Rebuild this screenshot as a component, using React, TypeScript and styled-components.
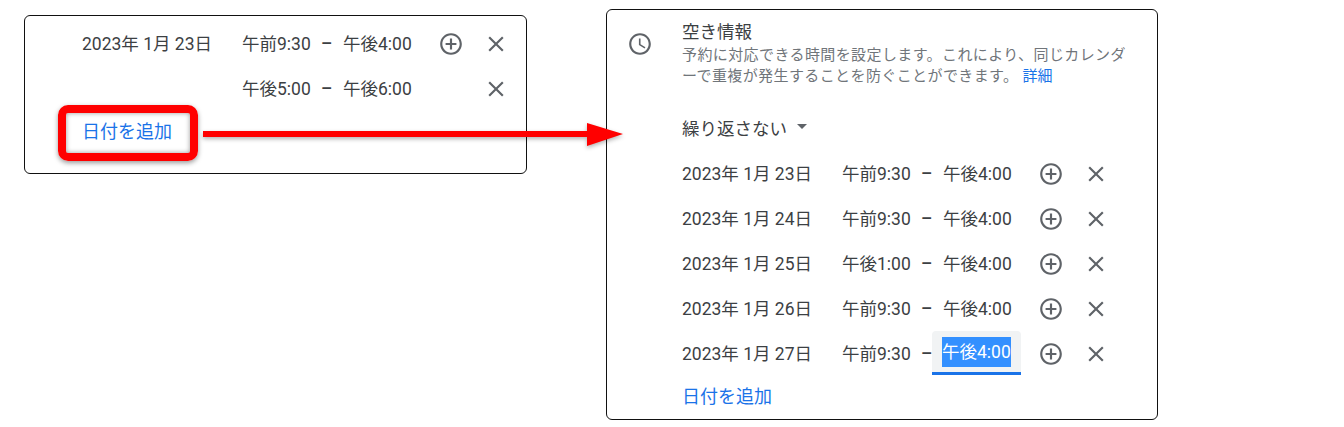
import React from "react";
import styled, { createGlobalStyle } from "styled-components";

const GlobalStyle = createGlobalStyle`
  html, body {
    margin: 0;
    padding: 0;
    background: #fff;
  }
  body {
    font-family: Roboto, "Noto Sans CJK JP", sans-serif;
    color: #3c4043;
  }
`;

const Page = styled.div`
  position: relative;
  width: 1344px;
  height: 427px;
  display: flex;
  align-items: flex-start;
  gap: 79px;
  padding-left: 24px;
  box-sizing: border-box;
  overflow: hidden;
`;

const Card = styled.section`
  box-sizing: border-box;
  border: 1px solid #111;
  border-radius: 6px;
  background: #fff;
`;

const SummaryCard = styled(Card)`
  width: 503px;
  height: 159px;
  margin-top: 15px;
  padding: 5px 0 0 57px;
`;

const DetailCard = styled(Card)`
  width: 552px;
  height: 411px;
  margin-top: 9px;
  padding: 10px 0 0 20px;
  display: flex;
  gap: 29px;
`;

const IconColumn = styled.div`
  padding-top: 11px;
  height: 26px;
`;

const Info = styled.div`
  flex: 1;
`;

const Title = styled.h2`
  margin: 0;
  font-size: 17.5px;
  font-weight: 400;
  line-height: 24px;
  color: #3c4043;
`;

const Description = styled.p`
  margin: 1px 0 19px;
  width: 450px;
  font-size: 15px;
  line-height: 21px;
  letter-spacing: 0.4px;
  color: #70757a;
`;

const LearnMore = styled.a`
  color: #1a73e8;
  letter-spacing: 0;
  margin-left: 4px;
`;

const RepeatSelect = styled.div`
  box-sizing: border-box;
  display: flex;
  align-items: center;
  gap: 10px;
  height: 45px;
  padding-bottom: 2px;
  font-size: 17.5px;
`;

const Caret = styled.span`
  width: 0;
  height: 0;
  border-left: 5px solid transparent;
  border-right: 5px solid transparent;
  border-top: 5px solid #5f6368;
  margin-top: -2px;
`;

const Row = styled.div`
  display: flex;
  align-items: center;
  height: 45px;
  font-size: 17.5px;
  white-space: nowrap;
`;

const CellText = styled.span`
  flex: none;
  margin-top: -3px;
`;

const DateCell = styled(CellText)`
  width: 160px;
`;

const TimeCell = styled(CellText)`
  width: 79px;
`;

const Dash = styled.span`
  flex: none;
  width: 22px;
  margin-top: 1px;
  font-weight: 500;
`;

const EndCell = styled(CellText)`
  width: 67px;
`;

const ActiveField = styled.span`
  box-sizing: border-box;
  flex: none;
  display: flex;
  align-items: center;
  justify-content: center;
  width: 89px;
  height: 44px;
  margin: -2px -11px 0 -11px;
  background: #f1f3f4;
  border-bottom: 3px solid #1a73e8;
  border-radius: 4px 4px 0 0;
`;

const Selected = styled.span`
  display: block;
  line-height: 30px;
  width: 69px;
  margin-top: 2px;
  background: #3390ff;
  color: #fff;
`;

const IconSlot = styled.span<{ $offset: number }>`
  flex: none;
  display: flex;
  width: 26px;
  height: 26px;
  margin-left: ${({ $offset }) => $offset}px;
`;

const AddDate = styled.a`
  display: flex;
  align-items: center;
  height: 44px;
  margin-top: -3px;
  font-size: 18px;
  color: #1a73e8;
`;

const Highlight = styled.div`
  position: absolute;
  left: 58px;
  top: 105px;
  width: 140px;
  height: 56px;
  box-sizing: border-box;
  border: 8px solid #ff0000;
  border-radius: 10px;
  box-shadow: 0 2px 5px rgba(0, 0, 0, 0.4), inset 0 0 5px rgba(0, 0, 0, 0.4);
`;

const Arrow = styled.svg`
  position: absolute;
  left: 198px;
  top: 115px;
  filter: drop-shadow(0 2px 2px rgba(0, 0, 0, 0.3));
`;

const Icon: React.FC<{ d: string }> = ({ d }) => (
  <svg width="26" height="26" viewBox="0 0 24 24" fill="#5f6368">
    <path d={d} />
  </svg>
);

const ADD_ICON =
  "M13 7h-2v4H7v2h4v4h2v-4h4v-2h-4V7zm-1-5C6.48 2 2 6.48 2 12s4.48 10 10 10 10-4.48 10-10S17.52 2 12 2zm0 18c-4.41 0-8-3.59-8-8s3.59-8 8-8 8 3.59 8 8-3.59 8-8 8z";
const CLOSE_ICON =
  "M19 6.41L17.59 5 12 10.59 6.41 5 5 6.41 10.59 12 5 17.59 6.41 19 12 13.41 17.59 19 19 17.59 13.41 12z";
const CLOCK_ICON =
  "M11.99 2C6.47 2 2 6.48 2 12s4.47 10 9.99 10C17.52 22 22 17.52 22 12S17.52 2 11.99 2zM12 20c-4.42 0-8-3.58-8-8s3.58-8 8-8 8 3.58 8 8-3.58 8-8 8zm.5-13H11v6l5.25 3.15.75-1.23-4.5-2.67z";

type SlotRow = {
  date?: string;
  start: string;
  end: string;
  active?: boolean;
  canAdd?: boolean;
};

const SlotLine: React.FC<SlotRow> = ({ date, start, end, active, canAdd = true }) => (
  <Row>
    <DateCell>{date}</DateCell>
    <TimeCell>{start}</TimeCell>
    <Dash>–</Dash>
    {active ? (
      <ActiveField>
        <Selected>{end}</Selected>
      </ActiveField>
    ) : (
      <EndCell>{end}</EndCell>
    )}
    {canAdd ? (
      <IconSlot $offset={28}>
        <Icon d={ADD_ICON} />
      </IconSlot>
    ) : (
      <IconSlot $offset={28} />
    )}
    <IconSlot $offset={19}>
      <Icon d={CLOSE_ICON} />
    </IconSlot>
  </Row>
);

const weekRows: SlotRow[] = [
  { date: "2023年 1月 23日", start: "午前9:30", end: "午後4:00" },
  { date: "2023年 1月 24日", start: "午前9:30", end: "午後4:00" },
  { date: "2023年 1月 25日", start: "午後1:00", end: "午後4:00" },
  { date: "2023年 1月 26日", start: "午前9:30", end: "午後4:00" },
  { date: "2023年 1月 27日", start: "午前9:30", end: "午後4:00", active: true },
];

const App: React.FC = () => {
  return (
    <Page>
      <GlobalStyle />
      <SummaryCard>
        <SlotLine date="2023年 1月 23日" start="午前9:30" end="午後4:00" />
        <SlotLine start="午後5:00" end="午後6:00" canAdd={false} />
        <AddDate>日付を追加</AddDate>
      </SummaryCard>
      <DetailCard>
        <IconColumn>
          <Icon d={CLOCK_ICON} />
        </IconColumn>
        <Info>
          <Title>空き情報</Title>
          <Description>
            予約に対応できる時間を設定します。これにより、同じカレンダーで重複が発生することを防ぐことができます。
            <LearnMore>詳細</LearnMore>
          </Description>
          <RepeatSelect>
            繰り返さない
            <Caret />
          </RepeatSelect>
          {weekRows.map((row) => (
            <SlotLine key={row.date} {...row} />
          ))}
          <AddDate>日付を追加</AddDate>
        </Info>
      </DetailCard>
      <Highlight />
      <Arrow width="430" height="40" viewBox="0 0 430 40">
        <rect x="5" y="16" width="392" height="6" fill="#ff0000" />
        <polygon points="389,8 425,19 389,31" fill="#ff0000" />
      </Arrow>
    </Page>
  );
};

export default App;
